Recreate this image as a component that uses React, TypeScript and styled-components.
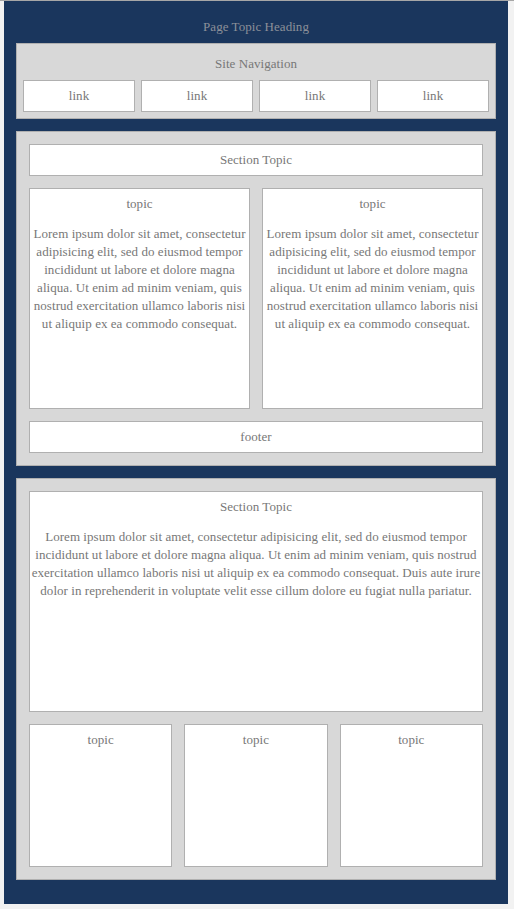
import React from "react";
import styled, { createGlobalStyle } from "styled-components";

const Global = createGlobalStyle`
  html, body { margin: 0; padding: 0; }
  body {
    background: #f2f2f2;
    border-top: 1px solid #a7a7a7;
    font-family: "Liberation Serif", "Times New Roman", serif;
    font-size: 13px;
    line-height: 18px;
    letter-spacing: 0.05px;
    color: #777;
  }
`;

const Page = styled.div`
  margin: 0 6px 5px 4px;
  background: #1a365d;
  padding: 17px 12px 24px;
  display: flex;
  flex-direction: column;
  gap: 12px;
`;

const Heading = styled.h1`
  margin: 0 0 -5px;
  font-size: 13px;
  font-weight: normal;
  line-height: 18px;
  text-align: center;
  color: #8c9099;
`;

const Panel = styled.section`
  background: #d8d8d8;
  border: 1px solid #b0b0b0;
  padding: 12px;
  display: flex;
  flex-direction: column;
  gap: 12px;
`;

const Nav = styled.nav`
  background: #d8d8d8;
  border: 1px solid #b0b0b0;
  padding: 11px 6px 6px;
  display: flex;
  flex-direction: column;
  gap: 7px;
`;

const NavTitle = styled.div`
  text-align: center;
`;

const LinkRow = styled.div`
  display: grid;
  grid-template-columns: repeat(4, 1fr);
  gap: 6px;
`;

const Box = styled.div<{ $h?: number }>`
  background: #fff;
  border: 1px solid #b0b0b0;
  padding: 6px 0;
  text-align: center;
  height: ${(p) => (p.$h ? `${p.$h}px` : "auto")};
  box-sizing: border-box;
`;

const NavLink = styled.a`
  display: block;
  background: #fff;
  border: 1px solid #b0b0b0;
  padding: 6px 2px;
  text-align: center;
  color: #777;
  text-decoration: none;
`;

const BoxTitle = styled.div`
  margin-bottom: 12px;
`;

const Text = styled.p`
  margin: 0;
`;

const Grid = styled.div<{ $cols: number }>`
  display: grid;
  grid-template-columns: repeat(${(p) => p.$cols}, 1fr);
  gap: 12px;
`;

const lorem =
  "Lorem ipsum dolor sit amet, consectetur adipisicing elit, sed do eiusmod tempor incididunt ut labore et dolore magna aliqua. Ut enim ad minim veniam, quis nostrud exercitation ullamco laboris nisi ut aliquip ex ea commodo consequat.";
const loremLong =
  lorem + " Duis aute irure dolor in reprehenderit in voluptate velit esse cillum dolore eu fugiat nulla pariatur.";

export default function App() {
  return (
    <>
      <Global />
      <Page>
        <Heading>Page Topic Heading</Heading>
        <Nav>
          <NavTitle>Site Navigation</NavTitle>
          <LinkRow>
            {[0, 1, 2, 3].map((i) => (
              <NavLink key={i} href="#">
                link
              </NavLink>
            ))}
          </LinkRow>
        </Nav>
        <Panel>
          <Box>Section Topic</Box>
          <Grid $cols={2}>
            <Box $h={221}>
              <BoxTitle>topic</BoxTitle>
              <Text>{lorem}</Text>
            </Box>
            <Box $h={221}>
              <BoxTitle>topic</BoxTitle>
              <Text>{lorem}</Text>
            </Box>
          </Grid>
          <Box>footer</Box>
        </Panel>
        <Panel>
          <Box $h={221}>
            <BoxTitle>Section Topic</BoxTitle>
            <Text>{loremLong}</Text>
          </Box>
          <Grid $cols={3}>
            <Box $h={143}>topic</Box>
            <Box $h={143}>topic</Box>
            <Box $h={143}>topic</Box>
          </Grid>
        </Panel>
      </Page>
    </>
  );
}
